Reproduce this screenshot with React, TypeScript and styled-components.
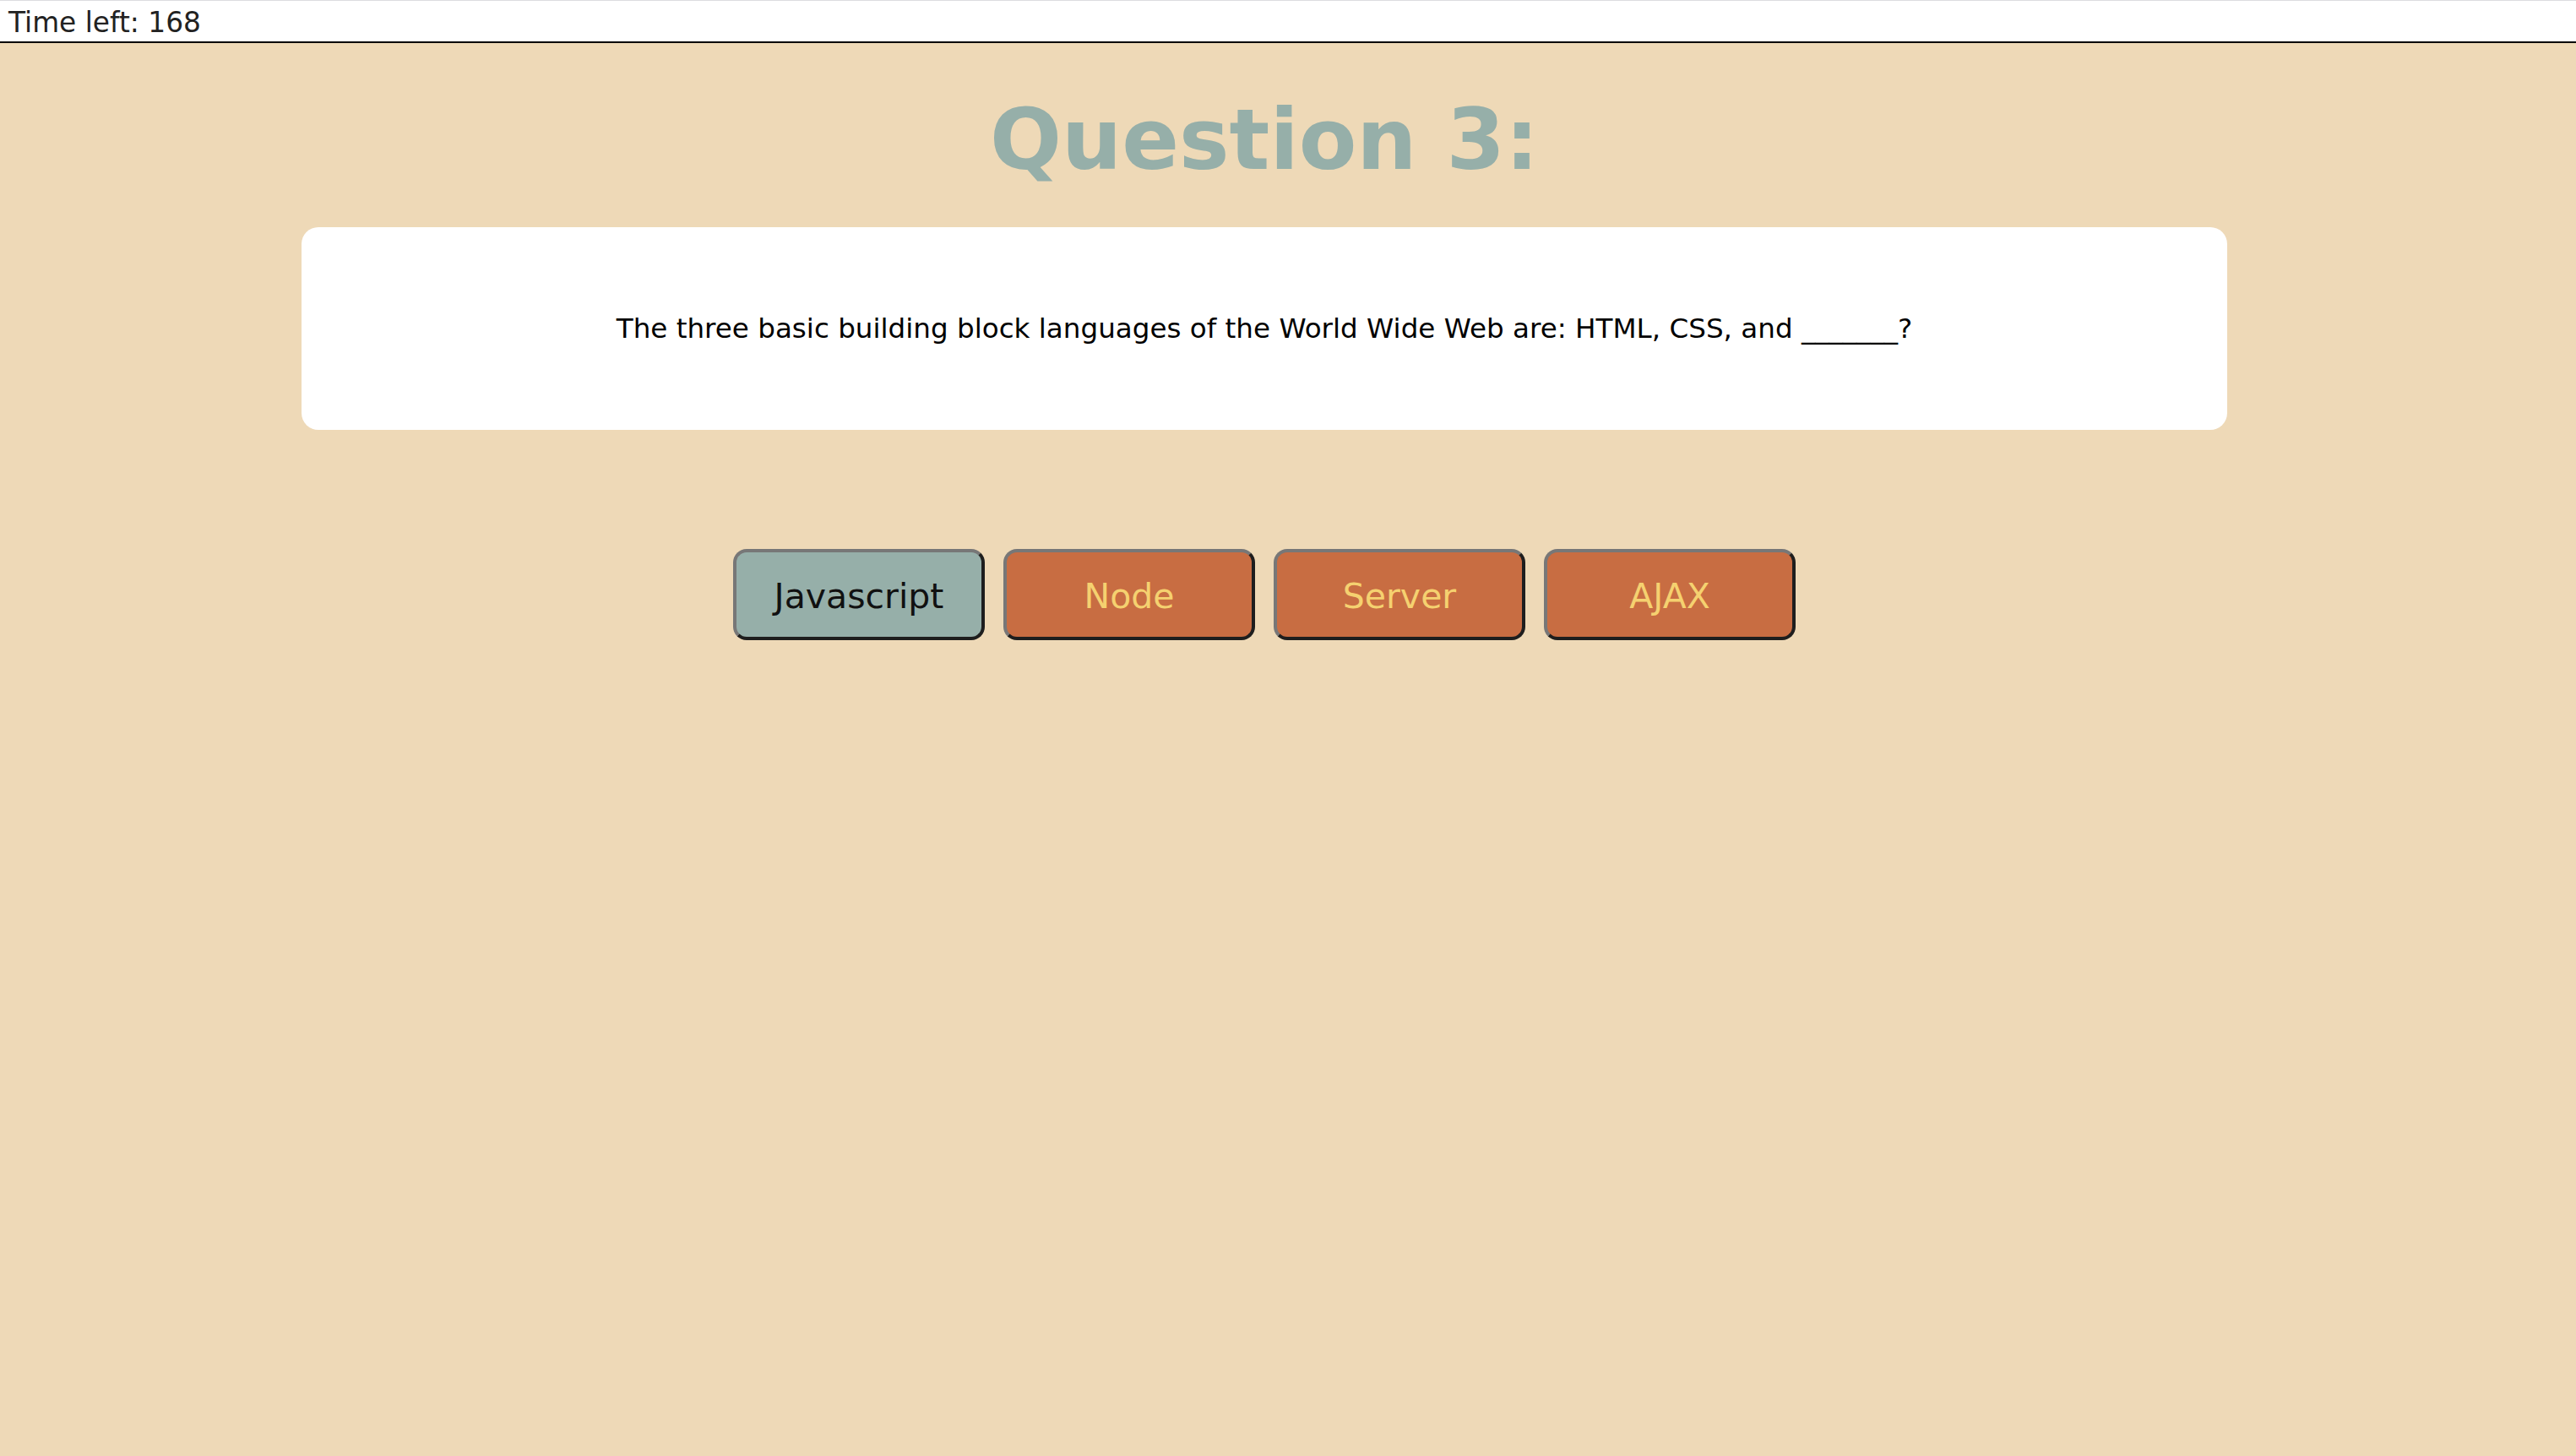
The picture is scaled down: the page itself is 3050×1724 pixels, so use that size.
import React from "react";
import styled, { createGlobalStyle } from "styled-components";

const GlobalStyle = createGlobalStyle`
  html, body {
    margin: 0;
    padding: 0;
    background: #eed9b7;
    font-family: Verdana, "DejaVu Sans", sans-serif;
  }
`;

const Page = styled.div`
  min-height: 1724px;
  background: #eed9b7;
`;

const TimerBar = styled.header`
  height: 46px;
  line-height: 48px;
  padding-top: 2px;
  background: #ffffff;
  border-top: 1px solid #dcdce0;
  border-bottom: 2px solid #000000;
  padding-left: 10px;
  font-size: 32.8px;
  color: #222222;
  overflow: hidden;
`;

const Main = styled.main`
  display: flex;
  flex-direction: column;
  align-items: center;
  padding-right: 56px;
`;

const Title = styled.h1`
  margin: 56px 0 45px;
  font-size: 100px;
  font-weight: bold;
  line-height: normal;
  color: #96afa9;
`;

const QuestionCard = styled.section`
  width: 2280px;
  height: 240px;
  box-sizing: border-box;
  background: #ffffff;
  border-radius: 20px;
  display: flex;
  align-items: center;
  justify-content: center;
`;

const QuestionText = styled.p`
  margin: 0;
  font-size: 32.6px;
  color: #000000;
`;

const Choices = styled.div`
  display: flex;
  gap: 22px;
  margin-top: 141px;
`;

const Choice = styled.button<{ $selected?: boolean }>`
  width: 298px;
  height: 108px;
  box-sizing: border-box;
  border: 4px solid;
  border-color: #777777 #1e1e1e #1e1e1e #777777;
  border-radius: 16px;
  background: ${(p) => (p.$selected ? "#96afa9" : "#c86d42")};
  color: ${(p) => (p.$selected ? "#111111" : "#f5d170")};
  font-family: Verdana, "DejaVu Sans", sans-serif;
  font-size: 41px;
  padding: 4px 0 0;
  cursor: pointer;
`;

const answers = ["Javascript", "Node", "Server", "AJAX"];

export default function App() {
  return (
    <Page>
      <GlobalStyle />
      <TimerBar>Time left: 168</TimerBar>
      <Main>
        <Title>Question 3:</Title>
        <QuestionCard>
          <QuestionText>
            The three basic building block languages of the World Wide Web are: HTML, CSS, and _______?
          </QuestionText>
        </QuestionCard>
        <Choices>
          {answers.map((a, i) => (
            <Choice key={a} $selected={i === 0}>
              {a}
            </Choice>
          ))}
        </Choices>
      </Main>
    </Page>
  );
}
